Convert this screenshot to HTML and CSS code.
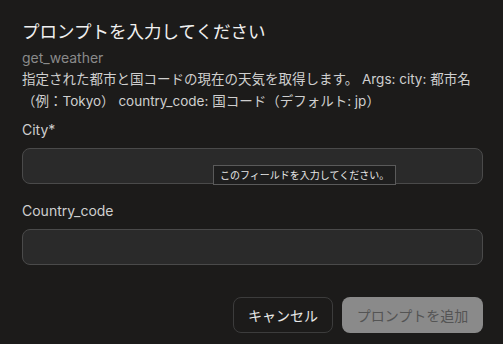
FILE: index.html
```html
<!DOCTYPE html>
<html lang="ja">
<head>
    <meta charset="UTF-8">
    <meta name="viewport" content="width=device-width, initial-scale=1.0">
    <title>プロンプトを入力してください</title>
    <link rel="stylesheet" href="styles.css">
</head>
<body>
    <div class="dialog">
        <h1>プロンプトを入力してください</h1>
        <div class="tool-name">get_weather</div>
        <p class="desc">指定された都市と国コードの現在の天気を取得します。 Args: city: 都市名<br>（例：Tokyo） country_code: 国コード（デフォルト: jp）</p>

        <div class="field">
            <label for="city">City*</label>
            <div class="input-wrap">
                <input id="city" type="text">
                <div class="tooltip">このフィールドを入力してください。</div>
            </div>
        </div>

        <div class="field">
            <label for="country">Country_code</label>
            <div class="input-wrap">
                <input id="country" type="text">
            </div>
        </div>

        <div class="actions">
            <button class="btn cancel">キャンセル</button>
            <button class="btn add" disabled>プロンプトを追加</button>
        </div>
    </div>
</body>
</html>
```

FILE: styles.css
```css
* {
    box-sizing: border-box;
    margin: 0;
}

body {
    background: #1c1b1a;
    font-family: "Inter", "Noto Sans CJK JP", sans-serif;
    color: #e6e6e6;
}

.dialog {
    padding: 20px 20px 0 22px;
}

h1 {
    font-size: 17.5px;
    font-weight: 400;
    line-height: 24px;
    color: #f0f0f0;
}

.tool-name {
    margin-top: 4px;
    font-size: 14px;
    line-height: 20px;
    color: #8a8a8a;
}

.desc {
    font-size: 13.5px;
    line-height: 22px;
    color: #cfcfcf;
    white-space: nowrap;
}

.field {
    margin-top: 8px;
}

.field + .field {
    margin-top: 17px;
}

label {
    display: block;
    font-size: 14px;
    line-height: 20px;
    color: #cfcfcf;
}

.input-wrap {
    position: relative;
    margin-top: 8px;
}

input {
    display: block;
    width: 100%;
    height: 36px;
    background: #2a2a2a;
    border: 1px solid #4a4a4a;
    border-radius: 8px;
    color: #eee;
    font: inherit;
    padding: 0 12px;
}

.tooltip {
    position: absolute;
    left: 191px;
    top: 17px;
    padding: 2px 6px;
    background: #1e1e1e;
    border: 1px solid #5a5a5a;
    font-size: 10px;
    line-height: 14px;
    color: #e8e8e8;
    white-space: nowrap;
}

.actions {
    display: flex;
    justify-content: flex-end;
    gap: 9px;
    margin-top: 32px;
}

.btn {
    height: 36px;
    border-radius: 8px;
    font-family: inherit;
    font-size: 14px;
    padding: 0;
    white-space: nowrap;
}

.cancel {
    width: 100px;
    background: transparent;
    border: 1px solid #3c3c3c;
    color: #e8e8e8;
}

.add {
    width: 141px;
    background: #8a8a8a;
    border: none;
    color: #545454;
}
```
